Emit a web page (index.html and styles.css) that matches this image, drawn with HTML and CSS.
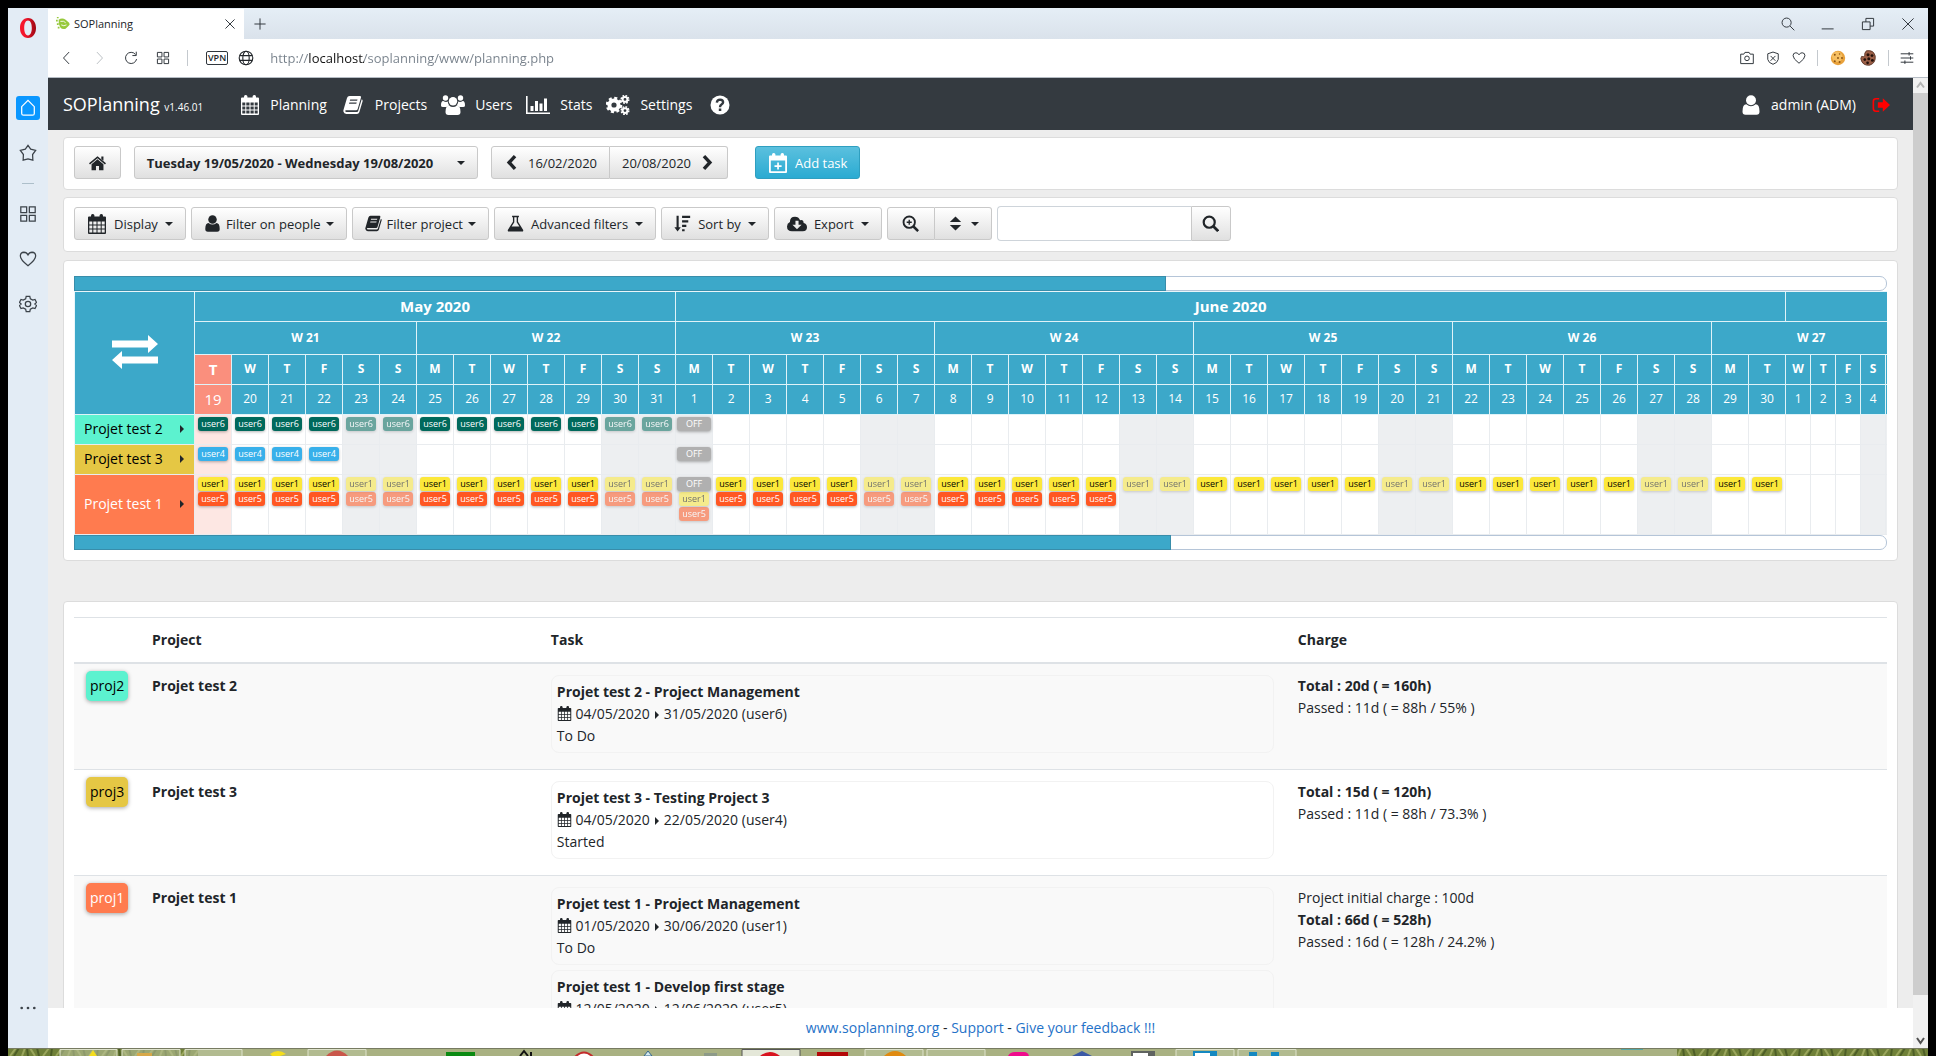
FILE: index.html
```html
<!DOCTYPE html>
<html lang="en">

<head>
    <meta charset="UTF-8">
    <meta name="viewport" content="width=device-width, initial-scale=1.0">
    <title>SOPlanning</title>
    <link rel="stylesheet" href="styles.css">
</head>

<body>
    <!-- Icon set -->
    <svg class="icon-defs" aria-hidden="true">
        <symbol id="i-calendar" viewBox="0 0 20 20">
            <path fill-rule="evenodd" d="M2 2.500h16q1 0 1 1V19q0 1-1 1H2q-1 0-1-1V3.500q0-1 1-1zM2.300 7.500v3h3v-3zM6.300 7.500v3h3.200v-3zM10.500 7.500v3h3.200v-3zM14.700 7.500v3h3v-3zM2.300 11.500v3h3v-3zM6.300 11.500v3h3.200v-3zM10.500 11.500v3h3.200v-3zM14.700 11.500v3h3v-3zM2.300 15.500v3h3v-3zM6.300 15.500v3h3.200v-3zM10.500 15.500v3h3.200v-3zM14.700 15.500v3h3v-3z"/>
            <rect x="4" y="0" width="3.400" height="5.500" rx="1.500"/><rect x="12.600" y="0" width="3.400" height="5.500" rx="1.500"/>
        </symbol>
        <symbol id="i-calendar-plus" viewBox="0 0 20 20">
            <path fill-rule="evenodd" d="M2 2.500h16q1 0 1 1V19q0 1-1 1H2q-1 0-1-1V3.500q0-1 1-1zM2.800 7.500v10.700h14.400V7.500z"/>
            <rect x="4" y="0" width="3.400" height="5.500" rx="1.500"/><rect x="12.600" y="0" width="3.400" height="5.500" rx="1.500"/>
            <path d="M9.200 9.500h1.700v2.700h2.700v1.700h-2.700v2.700H9.200v-2.700H6.500v-1.700h2.700z"/>
        </symbol>
        <symbol id="i-book" viewBox="0 0 20 20">
            <path fill-rule="evenodd" d="M6.500 1H17q1.500 0 1 1.600L14.700 14q-.4 1.300-1.700 1.300H3.200q-1.200 0-1 .8.200.9 1.300.9H14q.8 0 1.100-.8L18.700 4.300q1.300.6.900 2L16.300 17.300Q15.700 19 14 19H3.300Q.9 19 .4 16.600q-.2-1 .2-2L4 3Q4.600 1 6.500 1zM7.200 4.500l-.4 1.200h7.300l.4-1.200zM6.400 7.500L6 8.700h7.300l.4-1.200z"/>
        </symbol>
        <symbol id="i-users" viewBox="0 0 24 20">
            <circle cx="4.500" cy="3" r="2.700"/><circle cx="19.500" cy="3" r="2.700"/><circle cx="12" cy="6.200" r="4.200"/>
            <path d="M0 10.500Q0 5.800 2.300 6q2.500 1.500 4.400.5Q7 9 8.500 10.500 6.800 10.500 5.500 12H2Q0 12 0 10.500zM24 10.500Q24 5.800 21.700 6q-2.500 1.500-4.400.5Q17 9 15.500 10.500q1.700 0 3 1.500H22q2 0 2-1.500z"/>
            <path d="M4.500 17Q4.500 10.500 8 10.500q4 3 8 0 3.500 0 3.500 6.500 0 3-3 3h-9q-3 0-3-3z"/>
        </symbol>
        <symbol id="i-user" viewBox="0 0 20 20">
            <circle cx="10" cy="5.300" r="5"/>
            <path d="M1.500 16.500Q1.500 9.300 5.300 9.300q4.700 4 9.400 0 3.800 0 3.800 7.200 0 3.200-3 3.200h-11q-3 0-3-3.200z"/>
        </symbol>
        <symbol id="i-stats" viewBox="0 0 24 20">
            <path d="M0 1h1.600v16.400H24V19H0zM4.500 11h3v5h-3zM9 6h3v10H9zM13.500 8.500h3V16h-3zM18 3.500h3V16h-3z"/>
        </symbol>
        <symbol id="i-cogs" viewBox="0 0 24 20">
            <g fill="none" stroke="currentColor">
                <circle cx="8" cy="10" r="4.600" stroke-width="4"/><circle cx="8" cy="10" r="7" stroke-width="2.600" stroke-dasharray="3 2.500"/>
                <circle cx="19" cy="4.400" r="2.400" stroke-width="2"/><circle cx="19" cy="4.400" r="3.800" stroke-width="1.500" stroke-dasharray="1.700 1.280"/>
                <circle cx="19" cy="15.600" r="2.400" stroke-width="2"/><circle cx="19" cy="15.600" r="3.800" stroke-width="1.500" stroke-dasharray="1.700 1.280"/>
            </g>
        </symbol>
        <symbol id="i-help" viewBox="0 0 20 20">
            <circle cx="10" cy="10" r="9.500"/>
            <path d="M6.800 7.600Q7.200 4.600 10.100 4.600q3 .1 3 2.700 0 1.300-1.600 2.200Q10 10.400 10 12.200" fill="none" stroke="#343a40" stroke-width="2.400"/><rect x="8.800" y="13.500" width="2.500" height="2.500" fill="#343a40"/>
        </symbol>
        <symbol id="i-logout" viewBox="0 0 20 20">
            <path d="M8 3H4.500Q1.500 3 1.500 6v8q0 3 3 3H8" fill="none" stroke="currentColor" stroke-width="1.800"/><path d="M6.500 7H12V2.500L20 10l-8 7.500V13H6.500z"/>
        </symbol>
        <symbol id="i-home" viewBox="0 0 20 20">
            <path d="M10 2.500L20 11l-1.200 1.400L10 5 1.200 12.400 0 11zM14.500 3H17v5l-2.500-2.200zM10 6.300l7 5.900V19h-5.200v-5H8.200v5H3v-6.800z"/>
        </symbol>
        <symbol id="i-left" viewBox="0 0 20 20"><path d="M13 2.500L6 10l7 7.500" fill="none" stroke="currentColor" stroke-width="4"/></symbol>
        <symbol id="i-right" viewBox="0 0 20 20"><path d="M7 2.500l7 7.500-7 7.500" fill="none" stroke="currentColor" stroke-width="4"/></symbol>
        <symbol id="i-flask" viewBox="0 0 20 20">
            <path fill-rule="evenodd" d="M6 1h8v1.700h-1V8l5.700 9.200Q20 19.500 17.500 19.500h-15Q0 19.500 1.300 17.200L7 8V2.700H6zM8.600 2.700v5.700L5.400 13.500h9.200l-3.200-5.100V2.700z"/>
        </symbol>
        <symbol id="i-sort" viewBox="0 0 20 20">
            <path d="M3 1h2.500v13.500H8L4.200 19.500.5 14.500H3zM9.500 1H19v2.500H9.500zM9.500 6.300h7.300v2.500H9.500zM9.500 11.500h5V14h-5zM9.500 16.700h3v2.500h-3z"/>
        </symbol>
        <symbol id="i-cloud" viewBox="0 0 22 20">
            <path fill-rule="evenodd" d="M5.500 18Q0 18 0 12.700 0 9.300 3.200 7.700 3.200 2 8.800 2q4 0 5.600 3.800Q18.300 5 18.300 9q3.700 1 3.700 4.600Q22 18 17.300 18zM9.300 6.500v4.200H6l5 5 5-5h-3.300V6.500z"/>
        </symbol>
        <symbol id="i-zoom" viewBox="0 0 20 20">
            <g fill="none" stroke="currentColor"><circle cx="8.500" cy="8.500" r="6.700" stroke-width="2.200"/><path d="M13.500 13.500l5.500 5.500" stroke-width="3"/><path d="M8.500 5.500v6M5.500 8.500h6" stroke-width="1.600"/></g>
        </symbol>
        <symbol id="i-search" viewBox="0 0 20 20">
            <g fill="none" stroke="currentColor"><circle cx="8.500" cy="8.500" r="6.500" stroke-width="2.600"/><path d="M13.300 13.300l5.700 5.700" stroke-width="3.200"/></g>
        </symbol>
        <symbol id="i-updown" viewBox="0 0 12 18"><path d="M0 7.500L6 1.500l6 6zM0 10.500l6 6 6-6z"/></symbol>
        <symbol id="i-exchange" viewBox="0 0 46 34">
            <path d="M0 5.500h36V0l10 9-10 9v-5.500H0zM46 28.500H10V34L0 25l10-9v5.500h36z"/>
        </symbol>
        <symbol id="i-heart" viewBox="0 0 20 20"><path d="M10 17.500Q1.500 11 1.500 6.800 1.500 2.600 5.500 2.500 8.500 2.500 10 5.500q1.500-3 4.500-3 4 .1 4 4.300Q18.500 11 10 17.500z"/></symbol>
        <symbol id="i-grid" viewBox="0 0 20 20"><path d="M2 2h6.500v6.500H2zM11.500 2H18v6.500h-6.500zM2 11.500h6.500V18H2zM11.500 11.500H18V18h-6.500z"/></symbol>
        <symbol id="i-cross" viewBox="0 0 20 20"><path d="M3.500 3.500l13 13M16.500 3.500l-13 13"/></symbol>
    </svg>

    <div class="window">
        <aside class="side">
            <svg class="side-logo" viewBox="0 0 20 20"><defs><linearGradient id="og" x1="0" x2="1"><stop offset=".3" stop-color="#f5172c"/><stop offset="1" stop-color="#9c0712"/></linearGradient></defs><path fill="url(#og)" fill-rule="evenodd" d="M10 0C15 0 18 4.500 18 10s-3 10-8 10S2 15.500 2 10 5 0 10 0zM10 2.600C7.400 2.600 6.200 6 6.200 10s1.200 7.400 3.800 7.400 3.800-3.400 3.800-7.400S12.600 2.600 10 2.600z"/></svg>
            <button class="side-btn side-home" aria-label="Home"><svg class="line" viewBox="0 0 20 20"><path d="M3 8.500L10 1.500l7 7V16q0 2-2 2H5q-2 0-2-2z"/></svg></button>
            <button class="side-btn" aria-label="Bookmarks"><svg class="line" viewBox="0 0 20 20"><path d="M10 1.500l3 4.300 5.500 1.400-3.400 4.500.3 6.300L10 16.500 4.600 18l.3-6.300L1.500 7.200 7 5.800z"/></svg></button>
            <span class="side-dash"></span>
            <button class="side-btn" aria-label="Speed dial"><svg class="line"><use href="#i-grid"/></svg></button>
            <button class="side-btn" aria-label="Personal news"><svg class="line"><use href="#i-heart"/></svg></button>
            <button class="side-btn" aria-label="Preferences"><svg class="line" viewBox="0 0 20 20"><path d="M8 1.500h4l.6 2.700 2.700 1.500 2.500-.8 1.700 3.300L17.600 10l1.900 1.800-1.700 3.300-2.500-.8-2.700 1.500-.6 2.700H8l-.6-2.700-2.700-1.500-2.500.8L.5 11.800 2.400 10 .5 8.200l1.700-3.300 2.500.8 2.700-1.500z"/><circle cx="10" cy="10" r="3"/></svg></button>
            <button class="side-btn side-more" aria-label="More"><svg viewBox="0 0 20 20"><circle cx="3" cy="10" r="1.500"/><circle cx="10" cy="10" r="1.500"/><circle cx="17" cy="10" r="1.500"/></svg></button>
        </aside>

        <div class="browser">
            <div class="tabs">
                <div class="tab">
                    <svg class="favicon" viewBox="0 0 16 16"><path fill="#97c93d" d="M3 3Q7 .5 11 3l4 3.500q1.500 2-.5 3.500L11 13.500q-4 1-6-1.500Q2.500 8 3 3zM0 3h2v2H0zM1 7h2v2H1zM1 0h2v1.500H1zM2 11h2v2H2z"/><path d="M5 5q4-1 6 1.500M6 9q3 2 6 0" fill="none" stroke="#fff"/></svg>
                    <span class="tab-title">SOPlanning</span>
                    <button class="plain" aria-label="Close tab"><svg class="line"><use href="#i-cross"/></svg></button>
                </div>
                <button class="plain tab-new" aria-label="New tab"><svg class="line" viewBox="0 0 20 20"><path d="M10 2v16M2 10h16"/></svg></button>
                <div class="window-btns">
                    <button class="plain" aria-label="Search tabs"><svg class="line" viewBox="0 0 20 20"><circle cx="8" cy="8" r="6.500"/><path d="M13 13l6 6"/></svg></button>
                    <button class="plain" aria-label="Minimize"><svg class="line" viewBox="0 0 20 20"><path d="M1 17h17"/></svg></button>
                    <button class="plain" aria-label="Restore"><svg class="line" viewBox="0 0 20 20"><path d="M2 7h11v11H2zM7 7V2h11v11h-5"/></svg></button>
                    <button class="plain" aria-label="Close"><svg class="line" viewBox="0 0 20 20"><path d="M2 2l16 16M18 2L2 18"/></svg></button>
                </div>
            </div>

            <div class="address">
                <button class="plain" aria-label="Back"><svg class="line" viewBox="0 0 20 20"><path d="M13 1.500L5 10l8 8.500"/></svg></button>
                <button class="plain off" aria-label="Forward"><svg class="line" viewBox="0 0 20 20"><path d="M7 1.500l8 8.500-8 8.500"/></svg></button>
                <button class="plain" aria-label="Reload"><svg class="line" viewBox="0 0 20 20"><path d="M16.500 5A8 8 0 1 0 18 11.500M17.500 1v5.500H12"/></svg></button>
                <button class="plain" aria-label="Tiles"><svg class="line"><use href="#i-grid"/></svg></button>
                <span class="sep"></span>
                <span class="vpn">VPN</span>
                <svg class="line globe" viewBox="0 0 20 20"><circle cx="10" cy="10" r="8.500"/><ellipse cx="10" cy="10" rx="4" ry="8.500"/><path d="M2.500 7h15M2.500 13h15"/></svg>
                <input class="url" type="text" aria-label="Address" value="http://localhost/soplanning/www/planning.php">
                <button class="plain" aria-label="Snapshot"><svg class="line" viewBox="0 0 20 20"><path d="M1 4.500h4.500L7 2h6l1.500 2.500H19V18H1z"/><circle cx="10" cy="10.500" r="3.300"/></svg></button>
                <button class="plain" aria-label="Blocker"><svg class="line" viewBox="0 0 20 20"><path d="M10 1.500L17.500 4v8q-1 5-7.500 7-6.500-2-7.500-7V4zM6.500 7l7 7M13.500 7l-7 7"/></svg></button>
                <button class="plain" aria-label="Favourite"><svg class="line"><use href="#i-heart"/></svg></button>
                <span class="sep"></span>
                <button class="plain ext" aria-label="Cookies"><svg viewBox="0 0 20 20"><circle cx="10" cy="10" r="9" fill="#e9a23b"/><circle cx="9" cy="8.500" r="6.500" fill="#f6bf62"/><g fill="#8a5312"><circle cx="6" cy="6" r="1.200"/><circle cx="12" cy="5" r="1"/><circle cx="10" cy="10" r="1.200"/><circle cx="15" cy="10" r="1.200"/><circle cx="6" cy="14" r="1.200"/><circle cx="12" cy="15" r="1.200"/></g></svg></button>
                <button class="plain ext" aria-label="Cookie editor"><svg viewBox="0 0 20 20"><path fill="#9b5f47" stroke="#50291c" d="M8 1q9-1.500 11 6.500 1 9-7 11.500Q3 20 1 11l1-3q3 1 4-1-1-3 2-6z"/><g fill="#23100a"><circle cx="10" cy="6" r="1.900"/><circle cx="15" cy="7" r="1.800"/><circle cx="11" cy="11" r="1.900"/><circle cx="15.500" cy="13" r="1.800"/><circle cx="6" cy="12" r="1.700"/><circle cx="9.500" cy="16" r="1.700"/></g></svg></button>
                <span class="sep"></span>
                <button class="plain" aria-label="Easy setup"><svg class="line" viewBox="0 0 20 20"><path d="M1 4h18M1 10h18M1 16h18M13 1.500v5M15 7.500v5M7 13.500v5"/></svg></button>
            </div>

            <div class="viewport">
                <div class="page">
                    <nav class="navbar">
                        <a class="brand" href="#">SOPlanning <small>v1.46.01</small></a>
                        <a class="nav-link" href="#"><svg class="icon"><use href="#i-calendar"/></svg>Planning</a>
                        <a class="nav-link" href="#"><svg class="icon wide"><use href="#i-book"/></svg>Projects</a>
                        <a class="nav-link" href="#"><svg class="icon wide"><use href="#i-users"/></svg>Users</a>
                        <a class="nav-link" href="#"><svg class="icon wide"><use href="#i-stats"/></svg>Stats</a>
                        <a class="nav-link" href="#"><svg class="icon wide"><use href="#i-cogs"/></svg>Settings</a>
                        <a class="nav-link nav-help" href="#" aria-label="Help"><svg class="icon"><use href="#i-help"/></svg></a>
                        <a class="nav-link nav-user" href="#"><svg class="icon"><use href="#i-user"/></svg>admin (ADM)</a>
                        <a class="logout" href="#" aria-label="Logout"><svg class="icon"><use href="#i-logout"/></svg></a>
                    </nav>

                    <main class="content">
                        <section class="panel toolbar">
                            <button class="btn btn-home" aria-label="Home"><svg class="icon small"><use href="#i-home"/></svg></button>
                            <button class="btn btn-dates"><b>Tuesday 19/05/2020 - Wednesday 19/08/2020</b><span class="caret"></span></button>
                            <div class="btn-group">
                                <button class="btn"><svg class="icon small"><use href="#i-left"/></svg>16/02/2020</button>
                                <button class="btn">20/08/2020<svg class="icon small"><use href="#i-right"/></svg></button>
                            </div>
                            <button class="btn btn-info"><svg class="icon"><use href="#i-calendar-plus"/></svg>Add task</button>
                        </section>

                        <section class="panel toolbar filters">
                            <button class="btn"><svg class="icon"><use href="#i-calendar"/></svg>Display<span class="caret"></span></button>
                            <button class="btn tight"><svg class="icon small"><use href="#i-user"/></svg>Filter on people<span class="caret"></span></button>
                            <button class="btn tight"><svg class="icon small"><use href="#i-book"/></svg>Filter project<span class="caret"></span></button>
                            <button class="btn"><svg class="icon small"><use href="#i-flask"/></svg>Advanced filters<span class="caret"></span></button>
                            <button class="btn"><svg class="icon small"><use href="#i-sort"/></svg>Sort by<span class="caret"></span></button>
                            <button class="btn"><svg class="icon"><use href="#i-cloud"/></svg>Export<span class="caret"></span></button>
                            <div class="btn-group">
                                <button class="btn btn-zoom" aria-label="Zoom"><svg class="icon small"><use href="#i-zoom"/></svg></button>
                                <button class="btn" aria-label="Row height"><svg class="icon small"><use href="#i-updown"/></svg><span class="caret"></span></button>
                            </div>
                            <form class="search">
                                <input type="text" aria-label="Search">
                                <button class="btn" type="button" aria-label="Search"><svg class="icon small"><use href="#i-search"/></svg></button>
                            </form>
                        </section>

                        <section class="panel planning">
                            <div class="rail"><div class="rail-thumb" style="width: 60.3%"></div></div>
                            <div class="planning-scroll">
                                <table class="plan" id="plan"></table>
                            </div>
                            <div class="rail"><div class="rail-thumb" style="width: 60.6%"></div></div>
                        </section>

                        <section class="panel summary">
                            <table class="recap">
                                <colgroup><col class="col-code"><col class="col-project"><col class="col-task"><col></colgroup>
                                <thead>
                                    <tr><th></th><th>Project</th><th>Task</th><th>Charge</th></tr>
                                </thead>
                                <tbody>
                                    <tr>
                                        <td><span class="code proj2">proj2</span></td>
                                        <td><b>Projet test 2</b></td>
                                        <td>
                                            <div class="task"><b>Projet test 2 - Project Management</b><br><svg class="icon mini"><use href="#i-calendar"/></svg> 04/05/2020<span class="arrow"></span>31/05/2020 (user6)<br>To Do</div>
                                        </td>
                                        <td><b>Total : 20d ( = 160h)</b><br>Passed : 11d ( = 88h / 55% )</td>
                                    </tr>
                                    <tr>
                                        <td><span class="code proj3">proj3</span></td>
                                        <td><b>Projet test 3</b></td>
                                        <td>
                                            <div class="task"><b>Projet test 3 - Testing Project 3</b><br><svg class="icon mini"><use href="#i-calendar"/></svg> 04/05/2020<span class="arrow"></span>22/05/2020 (user4)<br>Started</div>
                                        </td>
                                        <td><b>Total : 15d ( = 120h)</b><br>Passed : 11d ( = 88h / 73.3% )</td>
                                    </tr>
                                    <tr>
                                        <td><span class="code proj1">proj1</span></td>
                                        <td><b>Projet test 1</b></td>
                                        <td>
                                            <div class="task"><b>Projet test 1 - Project Management</b><br><svg class="icon mini"><use href="#i-calendar"/></svg> 01/05/2020<span class="arrow"></span>30/06/2020 (user1)<br>To Do</div>
                                            <div class="task"><b>Projet test 1 - Develop first stage</b><br><svg class="icon mini"><use href="#i-calendar"/></svg> 12/05/2020<span class="arrow"></span>12/06/2020 (user5)</div>
                                        </td>
                                        <td>Project initial charge : 100d<br><b>Total : 66d ( = 528h)</b><br>Passed : 16d ( = 128h / 24.2% )</td>
                                    </tr>
                                </tbody>
                            </table>
                        </section>
                    </main>

                    <footer class="footer">
                        <a href="#">www.soplanning.org</a> - <a href="#">Support</a> - <a href="#">Give your feedback !!!</a>
                    </footer>
                </div>
                <div class="scrollbar">
                    <svg class="line" viewBox="0 0 15 15"><path d="M4 9.500L7.500 5 11 9.500" stroke="#b5b5b5"/></svg>
                    <div class="scroll-thumb"></div>
                    <svg class="line" viewBox="0 0 15 15"><path d="M4 5l3.500 5L11 5"/></svg>
                </div>
            </div>
        </div>
    </div>

    <!-- Desktop taskbar -->
    <div class="taskbar">
        <svg viewBox="0 0 1920 8" preserveAspectRatio="xMinYMin slice">
            <defs><pattern id="grass" width="46" height="8" patternUnits="userSpaceOnUse"><rect width="46" height="8" fill="#6f8038"/><path d="M2 8L8 0M14 8l3-8M27 8l-5-8M35 8l6-8" stroke="#9aa65c" stroke-width="2"/><path d="M6 8l5-8M20 8l-1-8M31 8l-2-8M43 8l1-8" stroke="#4d5e26" stroke-width="2"/></pattern></defs>
            <rect width="1920" height="8" fill="#a9b182"/>
            <rect width="190" height="8" fill="url(#grass)"/><rect x="1669" width="251" height="8" fill="url(#grass)"/>
            <g fill="#b9c19a" fill-opacity=".6" stroke="#dfe3cc"><path d="M52 9V1.500h57V9M114 9V1.500h58V9M177 9V1.500h57V9M300 9V1.500h58V9M857 9V1.500h58V9M919 9V1.500h58V9M1168 9V1.500h58V9M1230 9V1.500h58V9"/></g>
            <path d="M734 9V1.500h58V9" fill="#e4e7d8" stroke="#555"/>
            <path fill="#f4dd1c" d="M85 2l4 6h-8zM262 6q8-6 16 0l-6 2h-8z"/><path fill="#d7a848" d="M129 5h15v3h-15z"/>
            <path fill="#c9574a" d="M318 8q11-11 22 0z"/><path fill="#0b8a12" d="M438 4h29v4h-29z"/><path d="M512 8l4-5 4 5M523 8V4" fill="none" stroke="#111" stroke-width="2"/>
            <path fill="#fff" stroke="#c32b2b" stroke-width="2" d="M567 9q9-9 18 0z"/><path fill="#d5eaf0" stroke="#35668a" d="M636 8l4-5 4 5z"/>
            <path fill="#8d9a88" d="M696 5h13v3h-13z"/><path fill="#d8131f" d="M752 8q10-8 20 0z"/><path fill="#b30708" d="M809 4h31v4h-31z"/>
            <path fill="#e08a10" d="M876 8q11-10 22 0z"/><path fill="#ef0b8c" d="M1000 8q2-4 7-4h9q4 0 5 4z"/><path fill="#3b59a5" d="M1064 8l10-5 10 5z"/>
            <path fill="#5f6360" d="M1123 3h24v5h-24z"/><path fill="#fff" d="M1125 5h15v3h-15z"/><path fill="#1488c0" d="M1185 3h24v5h-24zM1241 4h8v4h-8zM1263 4h8v4h-8z"/><path fill="#fff" d="M1187 5h15v3h-15z"/>
            <path fill="#55a7a6" d="M1613 0h22v2h-22z"/><rect width="1920" height="1" fill="#777b62"/>
        </svg>
    </div>

    <script src="planning.js"></script>
</body>

</html>
```

FILE: styles.css
```css
/* Global Styles */
* {
    box-sizing: border-box;
}

body {
    margin: 0;
    padding: 8px 8px 0;
    height: 100vh;
    display: flex;
    flex-direction: column;
    overflow: hidden;
    background-color: #000;
    color: #212529;
    font-family: "Open Sans", "Noto Sans", sans-serif;
    font-size: 14px;
    line-height: 22px;
}

a {
    text-decoration: none;
}

button,
input {
    font-family: inherit;
}

.icon-defs {
    display: none;
}

.icon {
    width: 20px;
    height: 20px;
    fill: currentColor;
    flex: none;
}

.icon.wide {
    width: 24px;
}

.icon.small {
    width: 17px;
    height: 17px;
}

.icon.mini {
    width: 15px;
    height: 15px;
    vertical-align: -2px;
}

.line {
    fill: none;
    stroke: currentColor;
    stroke-width: 1.4;
}

/* Window */
.window {
    flex: 1;
    min-height: 0;
    display: flex;
    background-color: #fff;
}

.side {
    width: 40px;
    padding-top: 10px;
    display: flex;
    flex-direction: column;
    align-items: center;
    background-color: #e3ecf5;
    color: #3c434a;
}

.side-logo {
    width: 20px;
    height: 20px;
    margin-bottom: 58px;
}

.side-btn {
    width: 24px;
    height: 24px;
    margin-bottom: 21px;
    padding: 3px;
    border: 0;
    border-radius: 3px;
    background: none;
    color: inherit;
}

.side-btn svg {
    display: block;
    width: 18px;
    height: 18px;
}

.side-home {
    background-color: #0a97ff;
    color: #fff;
}

.side-dash {
    width: 12px;
    height: 1px;
    margin: -3px 0 18px;
    background-color: #adbfca;
}

.side-more {
    margin-top: auto;
    margin-bottom: 28px;
}

.side-more svg {
    fill: currentColor;
}

.browser {
    flex: 1;
    min-width: 0;
    display: flex;
    flex-direction: column;
}

.plain {
    width: 16px;
    height: 16px;
    padding: 0;
    border: 0;
    background: none;
    color: #30363c;
}

.plain svg {
    display: block;
    width: 14px;
    height: 14px;
    margin: auto;
}

.plain.off {
    color: #b9bec3;
}

/* Tabs */
.tabs {
    height: 31px;
    padding-top: 1px;
    display: flex;
    align-items: center;
    background: linear-gradient(#e5eef6, #dae2eb);
}

.tab {
    width: 196px;
    height: 30px;
    padding: 0 6px 0 7px;
    display: flex;
    align-items: center;
    gap: 3px;
    background-color: #fff;
}

.favicon {
    width: 16px;
    height: 14px;
}

.tab-title {
    flex: 1;
    font-size: 11px;
}

.tab-new {
    margin-left: 8px;
}

.window-btns {
    margin-left: auto;
    padding-right: 12px;
    display: flex;
    gap: 24px;
}

/* Address bar */
.address {
    height: 39px;
    padding: 0 13px 0 11px;
    display: flex;
    align-items: center;
    gap: 10px;
    border-bottom: 1px solid #b5bcc4;
}

.address > .plain:nth-child(-n+4) {
    margin-right: 6px;
}

.sep {
    width: 1px;
    height: 16px;
    background-color: #c4c9ce;
}

.vpn {
    margin-left: 8px;
    padding: 0 1px;
    border: 1px solid #30363c;
    border-radius: 2px;
    font-size: 9px;
    font-weight: 600;
    line-height: 12px;
}

.globe {
    width: 16px;
    height: 16px;
}

.url {
    flex: 1;
    padding: 0;
    margin-left: 6px;
    border: 0;
    outline: 0;
    font-size: 13px;
    color: transparent;
    background: linear-gradient(90deg, #76808a 39px, #111 39px, #111 94px, #76808a 94px);
    -webkit-background-clip: text;
    background-clip: text;
}

.ext {
    margin: 0 2px;
}

.ext svg {
    width: 16px;
    height: 16px;
}

/* Page and scrollbar */
.viewport {
    flex: 1;
    min-height: 0;
    display: flex;
}

.page {
    flex: 1;
    min-width: 0;
    display: flex;
    flex-direction: column;
    background-color: #ededed;
}

.scrollbar {
    width: 15px;
    display: flex;
    flex-direction: column;
    background-color: #f1f1f1;
    color: #505050;
}

.scrollbar svg {
    height: 15px;
    stroke-width: 2;
}

.scroll-thumb {
    flex: 1;
    margin-bottom: 38px;
    background-color: #cdcdcd;
}

/* Navbar */
.navbar {
    height: 52px;
    padding: 2px 23px 0 15px;
    display: flex;
    flex: none;
    align-items: center;
    background-color: #343a40;
}

.brand {
    margin-right: 37px;
    color: #fff;
    font-size: 18px;
}

.brand small {
    font-size: 10px;
}

.nav-link {
    display: flex;
    align-items: center;
    gap: 10px;
    margin-right: 14px;
    color: #fff;
}

.nav-help {
    margin-left: 4px;
}

.nav-user {
    margin-left: auto;
    margin-right: 16px;
}

.logout {
    display: flex;
    color: #f00;
}

.logout .icon {
    width: 18px;
}

/* Panels */
.content {
    flex: 1;
    min-height: 0;
    padding: 7px 15px 0;
    overflow: hidden;
}

.panel {
    padding: 8px 10px 10px;
    margin-bottom: 7px;
    border: 1px solid #dcdcdc;
    border-radius: 4px;
    background-color: #fff;
}

.toolbar {
    display: flex;
    align-items: center;
}

.filters {
    gap: 5px;
    margin-bottom: 8px;
}

/* Buttons */
.btn {
    height: 33px;
    padding: 0 12px;
    display: flex;
    align-items: center;
    justify-content: center;
    gap: 7px;
    border: 1px solid #c9c9c9;
    border-radius: 3px;
    background: linear-gradient(#fff, #e0e0e0);
    color: #212529;
    font-size: 13px;
    white-space: nowrap;
}

.btn-home {
    width: 47px;
    margin-right: 13px;
}

.btn-dates {
    width: 344px;
    margin-right: 13px;
    gap: 24px;
}

.btn-info {
    margin-left: 27px;
    border-color: #2f9fc0;
    background: linear-gradient(#5bc0de, #2aabd2);
    color: #fff;
}

.btn.tight {
    gap: 5px;
}

.btn-group {
    display: flex;
}

.btn-group .btn:first-child {
    border-radius: 3px 0 0 3px;
}

.btn-group .btn:last-child {
    border-left: 0;
    border-radius: 0 3px 3px 0;
}

.btn-zoom {
    width: 48px;
}

.caret {
    border: 4px solid transparent;
    border-top-color: currentColor;
    border-bottom: 0;
}

.search {
    display: flex;
}

.search input {
    width: 194px;
    height: 35px;
    border: 1px solid #ced4da;
    border-right: 0;
    border-radius: 4px 0 0 4px;
}

.search .btn {
    width: 40px;
    height: 35px;
    border-radius: 0 3px 3px 0;
}

/* Planning */
.planning {
    padding-top: 15px;
    margin-bottom: 40px;
}

.rail {
    height: 15px;
    border: 1px solid #b5c5d8;
    border-radius: 0 7px 7px 0;
}

.rail-thumb {
    height: 15px;
    margin: -1px;
    border: 1px solid #388daa;
    background-color: #3ca8c9;
}

.planning-scroll {
    overflow: hidden;
}

.plan {
    table-layout: fixed;
    width: 0;
    border-collapse: separate;
    border-spacing: 0;
    border-top: 1px solid #e9f6fa;
}

.plan th,
.plan td {
    height: 30px;
    padding: 0;
    border-right: 1px solid #e9ecef;
    border-bottom: 1px solid #e9ecef;
    line-height: 14px;
    white-space: nowrap;
}

.plan thead th {
    padding-bottom: 2px;
    border-color: #dff3f8;
    background-color: #3ca8c9;
    color: #fff;
    font-size: 12px;
    text-align: center;
}

.plan thead .month {
    font-size: 15px;
}

.plan thead .week {
    height: 33px;
    padding-bottom: 0;
}

.plan thead .num {
    font-weight: 400;
}

.plan thead .today {
    background-color: #fa8f7d;
    font-size: 15px;
}

.plan tr > :first-child.side-cell {
    border-left: 1px solid #e9f6fa;
}

.side-cell svg {
    display: block;
    width: 46px;
    height: 34px;
    margin: auto;
    fill: #fff;
}

.plan tbody .name {
    padding: 0 10px 1px 9px;
    font-weight: 400;
    text-align: left;
}

.name-row {
    display: flex;
    align-items: center;
    justify-content: space-between;
}

.plan tbody td {
    padding-top: 2px;
    vertical-align: top;
}

.plan tbody .tall {
    height: 60px;
}

.plan td.off {
    background-color: #edeff1;
}

.plan td.today {
    background-color: #fde7e3;
}

.arrow {
    display: inline-block;
    border: 4px solid transparent;
    border-left-color: currentColor;
    border-right: 0;
}

.name .arrow {
    color: #212529;
}

.badge {
    width: 30px;
    height: 14px;
    margin: 0 0 1px 3px;
    border-radius: 3px;
    box-shadow: 0 1px 3px rgba(0, 0, 0, 0.3);
    font-size: 9px;
    font-weight: 500;
    line-height: 13px;
    text-align: center;
}

.off .badge {
    opacity: 0.55;
}

.off .badge.holiday {
    width: 34px;
    margin-left: 1px;
    opacity: 1;
    background-color: #b0b0b0;
    color: #fff;
}

.user6 {
    background-color: #00695c;
    color: #fff;
}

.user4 {
    background-color: #38b0ea;
    color: #fff;
}

.user1 {
    background-color: #fce83a;
    color: #000;
}

.user5 {
    background-color: #ff5722;
    color: #fff;
}

/* Project colours */
.proj2 {
    background-color: #5cf2cf;
    color: #000;
}

.proj3 {
    background-color: #e5c744;
    color: #000;
}

.proj1 {
    background-color: #ff7b4f;
    color: #fff;
}

/* Summary */
.summary {
    padding-top: 15px;
}

.recap {
    width: 100%;
    table-layout: fixed;
    border-collapse: collapse;
}

.col-code {
    width: 66px;
}

.col-project {
    width: 22%;
}

.col-task {
    width: 41.2%;
}

.recap th {
    height: 45px;
    padding: 0 12px;
    border-top: 1px solid #dee2e6;
    border-bottom: 2px solid #dee2e6;
    text-align: left;
}

.recap td {
    padding: 11px 12px;
    border-top: 1px solid #dee2e6;
    vertical-align: top;
}

.recap tbody tr:nth-child(odd) {
    background-color: #f9f9f9;
}

.code {
    display: inline-block;
    margin-top: -4px;
    padding: 4px 4px;
    border-radius: 5px;
    box-shadow: 0 1px 4px rgba(0, 0, 0, 0.35);
}

.task {
    margin-bottom: 5px;
    padding: 5px 5px;
    border: 1px solid #f2f2f2;
    border-radius: 8px;
}

.task .arrow {
    margin: 0 5px;
}

/* Footer */
.footer {
    height: 40px;
    flex: none;
    line-height: 40px;
    text-align: center;
    background-color: #fff;
}

.footer a {
    color: #1f72c8;
}

/* Taskbar */
.taskbar {
    height: 8px;
    background-color: #a9b182;
}

.taskbar svg {
    display: block;
    width: 100%;
    height: 8px;
}
```

FILE: planning.js
```js
// Visible part of the calendar, one entry per month
const months = [
    { name: 'May 2020', number: 5, first: 19, last: 31, width: 37 },
    { name: 'June 2020', number: 6, first: 1, last: 30, width: 37 },
    { name: '', number: 7, first: 1, last: 5, width: 25 }
];

const projects = [
    { name: 'Projet test 2', css: 'proj2', tasks: [{ user: 'user6', end: 531 }] },
    { name: 'Projet test 3', css: 'proj3', tasks: [{ user: 'user4', end: 522 }] },
    { name: 'Projet test 1', css: 'proj1', tall: true, tasks: [{ user: 'user1', end: 630 }, { user: 'user5', end: 612 }] }
];

const letters = ['S', 'M', 'T', 'W', 'T', 'F', 'S'];
const days = [];

months.forEach(month => {
    for (let d = month.first; d <= month.last; d++) {
        const weekday = new Date(2020, month.number - 1, d).getDay();
        const holiday = month.number === 6 && d === 1;
        days.push({
            key: month.number * 100 + d,
            label: d,
            letter: letters[weekday],
            weekday,
            holiday,
            width: month.width,
            css: days.length === 0 ? 'today' : (weekday % 6 === 0 || holiday ? 'off' : '')
        });
    }
});

// The last day only peeks in at the edge, it gets no label
days[days.length - 1].label = '';
days[days.length - 1].letter = '';

// Group the days by week, a new week starts on Monday
const weeks = [];
days.forEach((day, i) => {
    if (i === 0 || day.weekday === 1) weeks.push(0);
    weeks[weeks.length - 1]++;
});

const headClass = day => (day.css === 'today' ? 'today' : '');

let html = '<colgroup><col style="width:121px">';
html += days.map(day => `<col style="width:${day.width}px">`).join('');
html += '</colgroup><thead><tr><th class="side-cell" rowspan="4"><svg><use href="#i-exchange"/></svg></th>';
html += months.map(m => `<th class="month" colspan="${m.last - m.first + 1}">${m.name}</th>`).join('');
html += '</tr><tr>' + weeks.map((n, i) => `<th class="week" colspan="${n}">W ${21 + i}</th>`).join('');
html += '</tr><tr>' + days.map(day => `<th class="${headClass(day)}">${day.letter}</th>`).join('');
html += '</tr><tr>' + days.map(day => `<th class="num ${headClass(day)}">${day.label}</th>`).join('');
html += '</tr></thead><tbody>';

projects.forEach(project => {
    html += `<tr><th class="side-cell name ${project.css} ${project.tall ? 'tall' : ''}"><div class="name-row">${project.name}<span class="arrow"></span></div></th>`;
    days.forEach(day => {
        let badges = day.holiday ? '<div class="badge holiday">OFF</div>' : '';
        project.tasks.forEach(task => {
            if (day.key <= task.end) badges += `<div class="badge ${task.user}">${task.user}</div>`;
        });
        html += `<td class="${day.css}">${badges}</td>`;
    });
    html += '</tr>';
});

document.getElementById('plan').innerHTML = html + '</tbody>';
```
